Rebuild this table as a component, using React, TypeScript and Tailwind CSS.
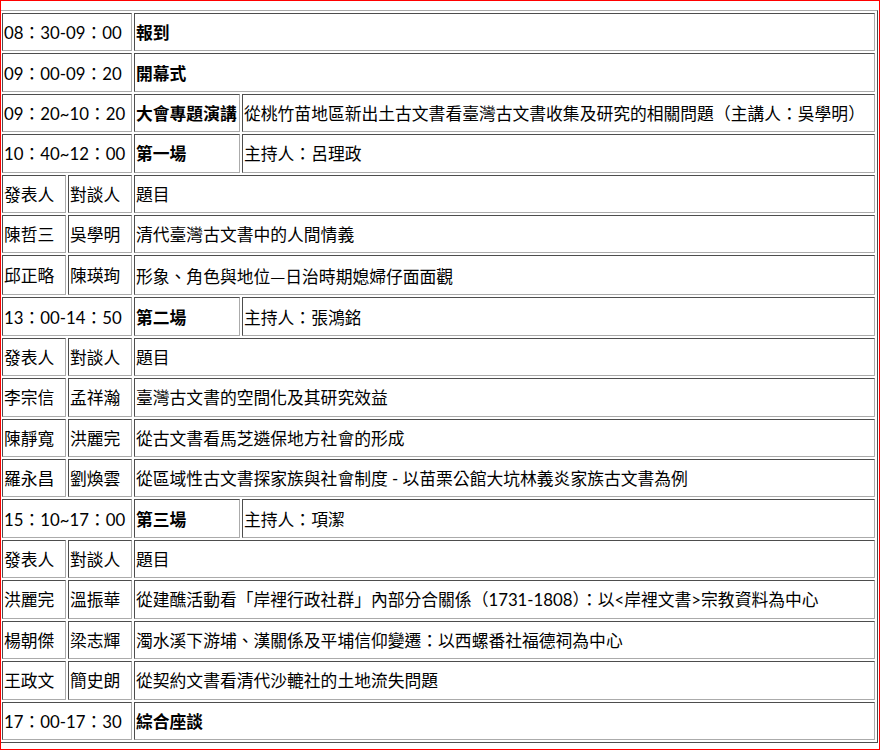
type Row =
  | { kind: "time"; time: string; title: string }
  | { kind: "session"; time: string; label: string; detail: string }
  | { kind: "paper"; speaker: string; discussant: string; title: string };

const rows: Row[] = [
  { kind: "time", time: "08：30-09：00", title: "報到" },
  { kind: "time", time: "09：00-09：20", title: "開幕式" },
  {
    kind: "session",
    time: "09：20~10：20",
    label: "大會專題演講",
    detail: "從桃竹苗地區新出土古文書看臺灣古文書收集及研究的相關問題（主講人：吳學明）",
  },
  { kind: "session", time: "10：40~12：00", label: "第一場", detail: "主持人：呂理政" },
  { kind: "paper", speaker: "發表人", discussant: "對談人", title: "題目" },
  { kind: "paper", speaker: "陳哲三", discussant: "吳學明", title: "清代臺灣古文書中的人間情義" },
  { kind: "paper", speaker: "邱正略", discussant: "陳瑛珣", title: "形象、角色與地位—日治時期媳婦仔面面觀" },
  { kind: "session", time: "13：00-14：50", label: "第二場", detail: "主持人：張鴻銘" },
  { kind: "paper", speaker: "發表人", discussant: "對談人", title: "題目" },
  { kind: "paper", speaker: "李宗信", discussant: "孟祥瀚", title: "臺灣古文書的空間化及其研究效益" },
  { kind: "paper", speaker: "陳靜寬", discussant: "洪麗完", title: "從古文書看馬芝遴保地方社會的形成" },
  {
    kind: "paper",
    speaker: "羅永昌",
    discussant: "劉煥雲",
    title: "從區域性古文書探家族與社會制度 - 以苗栗公館大坑林義炎家族古文書為例",
  },
  { kind: "session", time: "15：10~17：00", label: "第三場", detail: "主持人：項潔" },
  { kind: "paper", speaker: "發表人", discussant: "對談人", title: "題目" },
  {
    kind: "paper",
    speaker: "洪麗完",
    discussant: "溫振華",
    title: "從建醮活動看「岸裡行政社群」內部分合關係（1731-1808）：以<岸裡文書>宗教資料為中心",
  },
  {
    kind: "paper",
    speaker: "楊朝傑",
    discussant: "梁志輝",
    title: "濁水溪下游埔、漢關係及平埔信仰變遷：以西螺番社福德祠為中心",
  },
  { kind: "paper", speaker: "王政文", discussant: "簡史朗", title: "從契約文書看清代沙轆社的土地流失問題" },
  { kind: "time", time: "17：00-17：30", title: "綜合座談" },
];

// classic border="1" look: inset cells inside an outset table
const cell =
  "border border-t-[#4d4d4d] border-l-[#4d4d4d] border-b-[#ababab] border-r-[#ababab] px-[1px] pt-[2px] pb-0 align-middle text-left whitespace-nowrap";

// the em dash should be the full-width CJK one, not Lato's
function Title({ text }: { text: string }) {
  const parts = text.split("—");
  return (
    <>
      {parts.map((p, i) => (
        <span key={i}>
          {i > 0 && <span className="font-['Noto_Sans_CJK_TC']">—</span>}
          {p}
        </span>
      ))}
    </>
  );
}

export default function App() {
  return (
    <div
      className="w-[880px] h-[750px] border border-[#ff0000] overflow-hidden bg-white text-black text-[16.8px] leading-[1.2]"
      style={{ fontFamily: '"Lato", "Noto Sans CJK TC", sans-serif' }}
    >
      <table className="mt-[9px] ml-[-2px] w-[879px] h-[733px] table-fixed border-separate border-spacing-[2px] border border-t-[#ababab] border-l-[#ababab] border-b-[#4d4d4d] border-r-[#4d4d4d]">
        <colgroup>
          <col className="w-[64px]" />
          <col className="w-[64px]" />
          <col className="w-[106px]" />
          <col />
        </colgroup>
        <tbody>
          {rows.map((row, i) => {
            if (row.kind === "time") {
              return (
                <tr key={i}>
                  <td colSpan={2} className={`${cell} font-normal`}>
                    {row.time}
                  </td>
                  <td colSpan={2} className={`${cell} font-bold`}>
                    {row.title}
                  </td>
                </tr>
              );
            }
            if (row.kind === "session") {
              return (
                <tr key={i}>
                  <td colSpan={2} className={`${cell} font-normal`}>
                    {row.time}
                  </td>
                  <td className={`${cell} font-bold`}>{row.label}</td>
                  <td className={`${cell} font-normal`}>{row.detail}</td>
                </tr>
              );
            }
            return (
              <tr key={i}>
                <td className={`${cell} font-normal`}>{row.speaker}</td>
                <td className={`${cell} font-normal`}>{row.discussant}</td>
                <td colSpan={2} className={`${cell} font-normal`}>
                  <Title text={row.title} />
                </td>
              </tr>
            );
          })}
        </tbody>
      </table>
    </div>
  );
}
